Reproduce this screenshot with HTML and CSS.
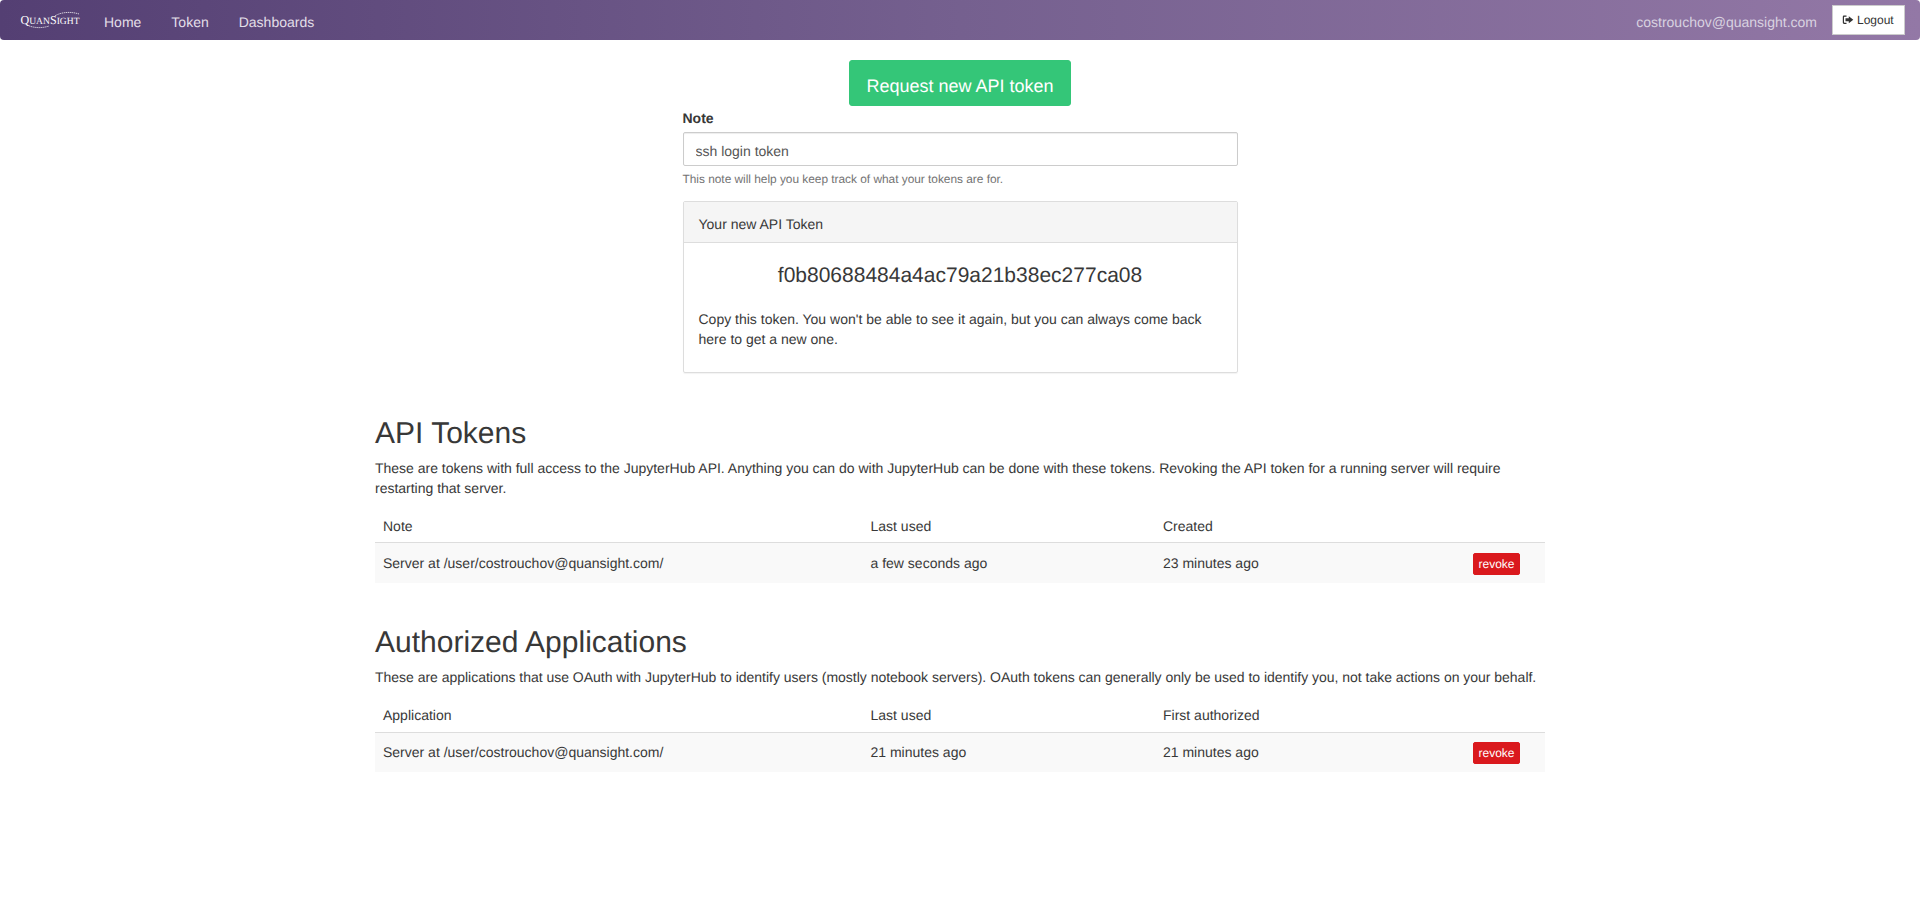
FILE: index.html
```html
<!DOCTYPE html>
<html lang="en">
<head>
<meta charset="utf-8">
<title>JupyterHub Token</title>
<link rel="stylesheet" href="styles.css">
</head>
<body>
<nav class="navbar">
  <a class="logo" href="#">
    <svg class="logo-svg" width="64" height="20" viewBox="0 0 64 20">
      <path class="logo-dots" d="M36 6C40 3 50 .8 60 4"/>
      <path class="logo-dots" d="M8 15C14 18 23 18.500 30 16"/>
      <text class="logo-text" x="1.500" y="14" textLength="59" lengthAdjust="spacingAndGlyphs">Q<tspan class="logo-small">UAN</tspan>S<tspan class="logo-small">IGHT</tspan></text>
    </svg>
  </a>
  <ul class="nav-links">
    <li><a href="#">Home</a></li>
    <li><a href="#">Token</a></li>
    <li><a href="#">Dashboards</a></li>
  </ul>
  <span class="nav-user">costrouchov@quansight.com</span>
  <a class="logout" href="#">
    <svg class="logout-icon" width="12" height="12" viewBox="0 0 12 12">
      <path d="M4.500 1.500H2.200C1.300 1.500 .8 2 .8 2.900V8.600C.8 9.500 1.300 10 2.200 10H4.500V8.800H2.500C2.200 8.800 2 8.600 2 8.300V3.200C2 2.900 2.200 2.700 2.500 2.700H4.500Z"/>
      <path d="M6.800 2.200L11.300 5.750L6.800 9.300V7.200H3.500V4.300H6.800Z"/>
    </svg>
    Logout
  </a>
</nav>

<main class="container">
  <div class="request">
    <div class="center"><button class="btn-request">Request new API token</button></div>
    <label class="note-label" for="note">Note</label>
    <input class="note-input" id="note" value="ssh login token">
    <small class="help">This note will help you keep track of what your tokens are for.</small>
    <section class="panel">
      <div class="panel-heading">Your new API Token</div>
      <div class="panel-body">
        <div class="token-value">f0b80688484a4ac79a21b38ec277ca08</div>
        <p class="token-text">Copy this token. You won't be able to see it again, but you can always come back here to get a new one.</p>
      </div>
    </section>
  </div>

  <section class="block block-tokens">
    <h2>API Tokens</h2>
    <p class="intro intro-tokens">These are tokens with full access to the JupyterHub API. Anything you can do with JupyterHub can be done with these tokens. Revoking the API token for a running server will require restarting that server.</p>
    <table>
      <thead><tr><th class="c1">Note</th><th class="c2">Last used</th><th class="c3">Created</th><th></th></tr></thead>
      <tbody><tr><td>Server at /user/costrouchov@quansight.com/</td><td>a few seconds ago</td><td>23 minutes ago</td><td class="action"><button class="revoke">revoke</button></td></tr></tbody>
    </table>
  </section>

  <section class="block block-apps">
    <h2>Authorized Applications</h2>
    <p class="intro">These are applications that use OAuth with JupyterHub to identify users (mostly notebook servers). OAuth tokens can generally only be used to identify you, not take actions on your behalf.</p>
    <table>
      <thead><tr><th class="c1">Application</th><th class="c2">Last used</th><th class="c3">First authorized</th><th></th></tr></thead>
      <tbody><tr><td>Server at /user/costrouchov@quansight.com/</td><td>21 minutes ago</td><td>21 minutes ago</td><td class="action"><button class="revoke">revoke</button></td></tr></tbody>
    </table>
  </section>
</main>
</body>
</html>
```
FILE: styles.css
```css
* { box-sizing: border-box; }
html, body { margin: 0; padding: 0; }
body {
  font-family: "Liberation Sans", Arial, sans-serif;
  font-size: 14px;
  line-height: 20px;
  color: #383838;
  background: #fff;
  text-rendering: geometricPrecision;
}
a { text-decoration: none; }

.navbar {
  display: flex;
  align-items: center;
  height: 40px;
  border-radius: 4px;
  background: linear-gradient(to right, #543f73 0%, #75608f 50%, #9378a6 100%);
}
.logo { display: block; width: 85px; height: 20px; margin-left: 19px; flex: none; }
.logo-svg { display: block; }
.logo-dots { fill: none; stroke: #fff; stroke-width: 1; stroke-dasharray: 1 1; }
.logo-text { font-family: "Liberation Serif", serif; font-size: 12px; fill: #fff; }
.logo-small { font-size: 9.500px; }
.nav-links { display: flex; list-style: none; margin: 0; padding: 3px 0 0; flex: 1; }
.nav-links li { margin-right: 30px; }
.nav-links a { color: #e3dfe8; }
.nav-user { color: #d9d2e0; margin-right: 15px; padding-top: 3px; }
.logout {
  display: flex;
  align-items: center;
  gap: 3px;
  width: 73px;
  height: 30px;
  margin-right: 15px;
  padding-left: 9px;
  background: #fff;
  border: 1px solid #ccc;
  color: #333;
  font-size: 12px;
  flex: none;
}
.logout-icon { fill: #333; flex: none; }

.container { width: 1170px; margin: 0 auto; }
.request { width: 555px; margin: 0 auto; padding-top: 20px; }
.center { text-align: center; }
.btn-request {
  height: 46px;
  padding: 13px 16px 7px;
  font: 18px/24px "Liberation Sans", Arial, sans-serif;
  text-rendering: geometricPrecision;
  color: #fff;
  background: #34c678;
  border: 1px solid #34c678;
  border-radius: 3px;
}
.note-label { display: block; font-weight: 700; margin: 2px 0 4px; height: 20px; line-height: 20px; }
.note-input {
  display: block;
  width: 100%;
  height: 34px;
  padding: 8px 12px 4px;
  font: 14px/20px "Liberation Sans", Arial, sans-serif;
  text-rendering: geometricPrecision;
  color: #555;
  border: 1px solid #ccc;
  border-radius: 2px;
  box-shadow: inset 0 1px 1px rgba(0,0,0,.075);
}
.help { display: block; margin-top: 5px; font-size: 11.900px; line-height: 17px; color: #737373; letter-spacing: -0.02px; }
.panel {
  margin-top: 13px;
  border: 1px solid #ddd;
  border-radius: 2px;
  box-shadow: 0 1px 1px rgba(0,0,0,.05);
  height: 172px;
}
.panel-heading {
  height: 41px;
  padding: 12px 15px 8px;
  background: #f5f5f5;
  border-bottom: 1px solid #ddd;
}
.panel-body { padding: 15px; }
.token-value { font-size: 21px; line-height: 24px; text-align: center; margin-top: 6px; }
.token-text { margin: 21px 0 0; }

.block-tokens { margin-top: 44px; }
.block-apps { margin-top: 43px; }
h2 { font-size: 30px; font-weight: 500; line-height: 33px; margin: 0 0 8px; }
.intro { margin: 0 0 10px; letter-spacing: -0.02px; }
.intro-tokens { margin-bottom: 9px; letter-spacing: -0.008px; }
table { width: 100%; border-collapse: separate; border-spacing: 0; table-layout: fixed; }
th, td { text-align: left; font-weight: 400; line-height: 20px; }
th { padding: 9px 8px 6px; border-bottom: 1px solid #ddd; }
.block-apps th { padding: 8.500px 8px 6.500px; }
td { padding: 8.500px 8px; }
td.action { padding: 9.500px 8px 8px; }
tbody tr { background: #f9f9f9; }
.c1 { width: 487.500px; }
.c2 { width: 292.500px; }
.c3 { width: 310px; }
.revoke {
  display: block;
  width: 47px;
  height: 22px;
  padding: 1px 0;
  font: 12px/18px "Liberation Sans", Arial, sans-serif;
  text-rendering: geometricPrecision;
  color: #fff;
  background: #da191d;
  border: 1px solid #da191d;
  border-radius: 2px;
}
```
